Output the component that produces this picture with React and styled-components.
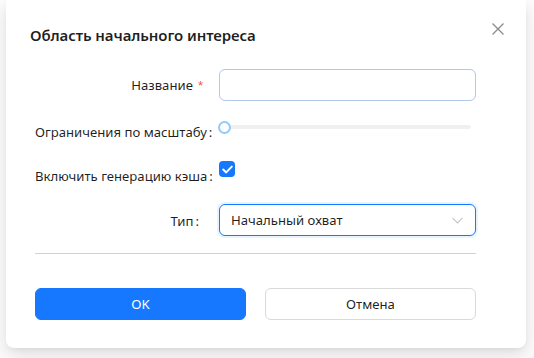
import React from "react";
import styled, { createGlobalStyle } from "styled-components";

const Global = createGlobalStyle`
  html, body { margin: 0; padding: 0; background: #fff; overflow: hidden; }
  body { font-family: "Noto Sans", "Open Sans", sans-serif; font-size: 13.15px; color: rgba(0,0,0,0.88); }
  * { box-sizing: border-box; }
`;

const Page = styled.div`
  width: 534px;
  height: 358px;
  padding: 0 8px 0 6px;
`;

const Card = styled.div`
  width: 520px;
  height: 348px;
  background: #fff;
  border-radius: 0 0 8px 8px;
  box-shadow: 0 6px 16px 0 rgba(0,0,0,0.08), 0 3px 6px -4px rgba(0,0,0,0.12), 0 9px 28px 8px rgba(0,0,0,0.05);
  position: relative;
  padding: 23px 50px 28px 24px;
`;

const Title = styled.div`
  font-size: 15px;
  font-weight: 600;
  line-height: 24px;
  letter-spacing: -0.1px;
  color: rgba(0,0,0,0.88);
`;

const Close = styled.button`
  position: absolute;
  top: 18px;
  right: 17px;
  width: 22px;
  height: 22px;
  border: 0;
  background: transparent;
  padding: 0;
  display: flex;
  align-items: center;
  justify-content: center;
  color: #8a8a8a;
`;

const Form = styled.div`
  padding-left: 5px;
  margin-top: 22px;
  display: flex;
  flex-direction: column;
`;

const Row = styled.div`
  display: grid;
  grid-template-columns: 177px 257px;
  column-gap: 7px;
  height: ${(p) => p.$h || 32}px;
  margin-top: ${(p) => p.$mt || 0}px;
`;

const Label = styled.div`
  text-align: right;
  white-space: nowrap;
  line-height: 32px;
  padding-right: ${(p) => p.$pr || 0}px;
  color: rgba(0,0,0,0.88);
  margin-top: ${(p) => p.$mt || 0}px;
`;

const Req = styled.span`
  color: #ff4d4f;
  margin-left: 5px;
  font-family: "Liberation Sans", sans-serif;
`;

const Colon = styled.span`
  margin-left: 2px;
`;

const Input = styled.div`
  height: 32px;
  border: 1px solid #b0c8ec;
  border-radius: 6px;
  background: #fff;
`;

const SliderWrap = styled.div`
  position: relative;
  height: 32px;
`;

const Rail = styled.div`
  position: absolute;
  left: 5px;
  right: 5px;
  top: 12px;
  height: 4px;
  border-radius: 2px;
  background: #f0f0f0;
`;

const Handle = styled.div`
  position: absolute;
  left: -1px;
  top: 7.5px;
  width: 13px;
  height: 13px;
  border-radius: 50%;
  background: #fff;
  border: 2px solid #91caff;
`;

const CheckWrap = styled.div`
  padding-top: 4px;
`;

const Check = styled.div`
  width: 16px;
  height: 16px;
  border-radius: 4px;
  background: #1677ff;
  display: flex;
  align-items: center;
  justify-content: center;
`;

const Select = styled.div`
  height: 32px;
  border: 1px solid #1677ff;
  border-radius: 6px;
  box-shadow: 0 0 0 2px rgba(5,145,255,0.1);
  display: flex;
  align-items: center;
  justify-content: space-between;
  padding: 0 12px 0 11px;
  color: rgba(0,0,0,0.88);
`;

const Divider = styled.div`
  height: 1px;
  background: #d2d2d2;
  margin: 17px 0 0 5px;
  width: 441px;
`;

const Buttons = styled.div`
  display: grid;
  grid-template-columns: 211px 211px;
  column-gap: 19px;
  margin: 34px 0 0 5px;
`;

const Button = styled.button`
  height: 32px;
  border-radius: 6px;
  font-family: inherit;
  font-size: 13.15px;
  border: 1px solid ${(p) => (p.$primary ? "#1677ff" : "#d9d9d9")};
  background: ${(p) => (p.$primary ? "#1677ff" : "#fff")};
  color: ${(p) => (p.$primary ? "#fff" : "rgba(0,0,0,0.88)")};
  padding: 0;
`;

export default function App() {
  return (
    <>
      <Global />
      <Page>
        <Card>
          <Title>Область начального интереса</Title>
          <Close aria-label="close">
            <svg width="12" height="12" viewBox="0 0 12 12">
              <path d="M0.5 0.5 L11.5 11.5 M11.5 0.5 L0.5 11.5" stroke="currentColor" strokeWidth="1.3" fill="none" />
            </svg>
          </Close>
          <Form>
            <Row>
              <Label $pr={9}>
                Название<Req>*</Req>
              </Label>
              <Input />
            </Row>
            <Row $mt={12}>
              <Label $mt={3}>
                Ограничения по масштабу<Colon>:</Colon>
              </Label>
              <SliderWrap>
                <Rail />
                <Handle />
              </SliderWrap>
            </Row>
            <Row $mt={12} $h={35}>
              <Label $mt={3}>
                Включить генерацию кэша<Colon>:</Colon>
              </Label>
              <CheckWrap>
                <Check>
                  <svg width="11" height="9" viewBox="0 0 11 9">
                    <path d="M1.2 4.6 L4.2 7.4 L9.8 1.6" stroke="#fff" strokeWidth="2" fill="none" strokeLinecap="round" strokeLinejoin="round" />
                  </svg>
                </Check>
              </CheckWrap>
            </Row>
            <Row $mt={12}>
              <Label $pr={13} $mt={1}>
                Тип<Colon>:</Colon>
              </Label>
              <Select>
                <span>Начальный охват</span>
                <svg width="11" height="7" viewBox="0 0 11 7">
                  <path d="M0.5 0.8 L5.5 6 L10.5 0.8" stroke="#c4c4c4" strokeWidth="1.1" fill="none" />
                </svg>
              </Select>
            </Row>
          </Form>
          <Divider />
          <Buttons>
            <Button $primary>OK</Button>
            <Button>Отмена</Button>
          </Buttons>
        </Card>
      </Page>
    </>
  );
}
